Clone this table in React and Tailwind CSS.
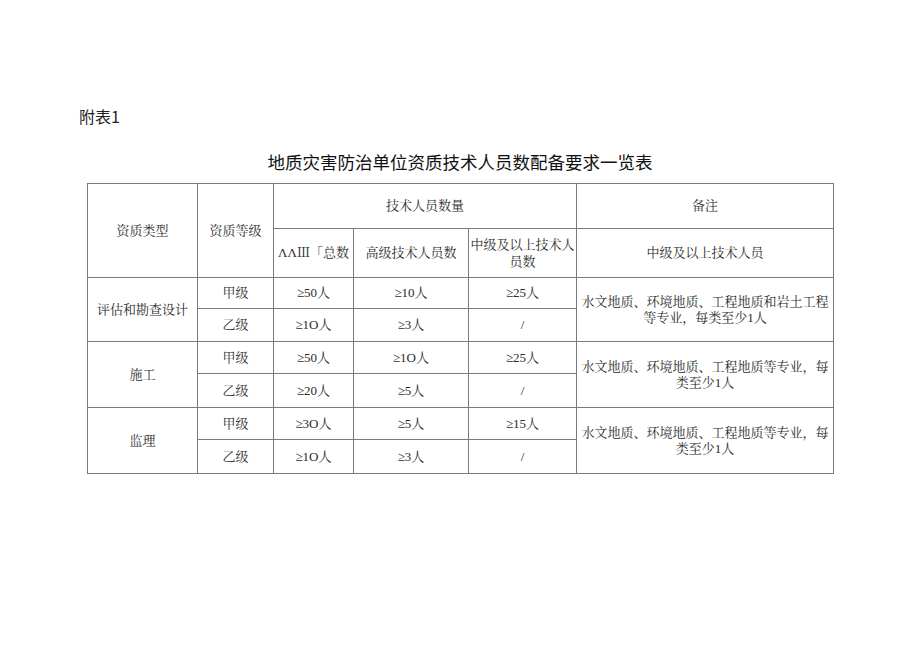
export default function App() {
  const serif = { fontFamily: '"Liberation Serif", "Noto Serif CJK SC", "Noto Sans CJK SC", serif' };
  const td = "border border-[#7a7a7a] text-center align-middle p-0 leading-[16px]";
  const rows = [
    { type: "评估和勘查设计", grade: "甲级", a: "≥50人", b: "≥10人", c: "≥25人", note: "水文地质、环境地质、工程地质和岩土工程等专业，每类至少1人", h: "h-[31px]" },
    { grade: "乙级", a: "≥1O人", b: "≥3人", c: "/", h: "h-[33px]" },
    { type: "施工", grade: "甲级", a: "≥50人", b: "≥1O人", c: "≥25人", note: "水文地质、环境地质、工程地质等专业，每类至少1人", h: "h-[32px]" },
    { grade: "乙级", a: "≥20人", b: "≥5人", c: "/", h: "h-[34px]" },
    { type: "监理", grade: "甲级", a: "≥3O人", b: "≥5人", c: "≥15人", note: "水文地质、环境地质、工程地质等专业，每类至少1人", h: "h-[32px]" },
    { grade: "乙级", a: "≥1O人", b: "≥3人", c: "/", h: "h-[34px]" },
  ];
  return (
    <div className="w-[920px] h-[651px] bg-white overflow-hidden">
      <div className="pt-[108px] pl-[79px] text-[16px] leading-[16px] text-[#222]" style={{ fontFamily: '"Noto Sans CJK SC", sans-serif' }}>
        附表1
      </div>
      <div className="mt-[29px] w-[746px] ml-[87px] text-center text-[17.5px] leading-[18px] font-normal text-[#111]" style={{ fontFamily: '"Noto Sans CJK SC", sans-serif' }}>
        地质灾害防治单位资质技术人员数配备要求一览表
      </div>
      <table className="mt-[12px] ml-[87px] w-[746px] border-collapse table-fixed text-[13px] text-[#2b2b2b]" style={serif}>
        <colgroup>
          <col className="w-[110px]" />
          <col className="w-[76px]" />
          <col className="w-[80px]" />
          <col className="w-[115px]" />
          <col className="w-[108px]" />
          <col className="w-[257px]" />
        </colgroup>
        <tbody>
          <tr className="h-[45px]">
            <td rowSpan={2} className={td}>资质类型</td>
            <td rowSpan={2} className={td}>资质等级</td>
            <td colSpan={3} className={td}>技术人员数量</td>
            <td className={td}>备注</td>
          </tr>
          <tr className="h-[49px]">
            <td className={td}>ΛΛⅢ「总数</td>
            <td className={td}>高级技术人员数</td>
            <td className={td + " leading-[17px]"}>中级及以上技术人员数</td>
            <td className={td}>中级及以上技术人员</td>
          </tr>
          {rows.map((r, i) => (
            <tr key={i} className={r.h}>
              {r.type && <td rowSpan={2} className={td}>{r.type}</td>}
              <td className={td}>{r.grade}</td>
              <td className={td}>{r.a}</td>
              <td className={td}>{r.b}</td>
              <td className={td}>{r.c}</td>
              {r.note && <td rowSpan={2} className={td + " px-[4px]"}>{r.note}</td>}
            </tr>
          ))}
        </tbody>
      </table>
    </div>
  );
}
